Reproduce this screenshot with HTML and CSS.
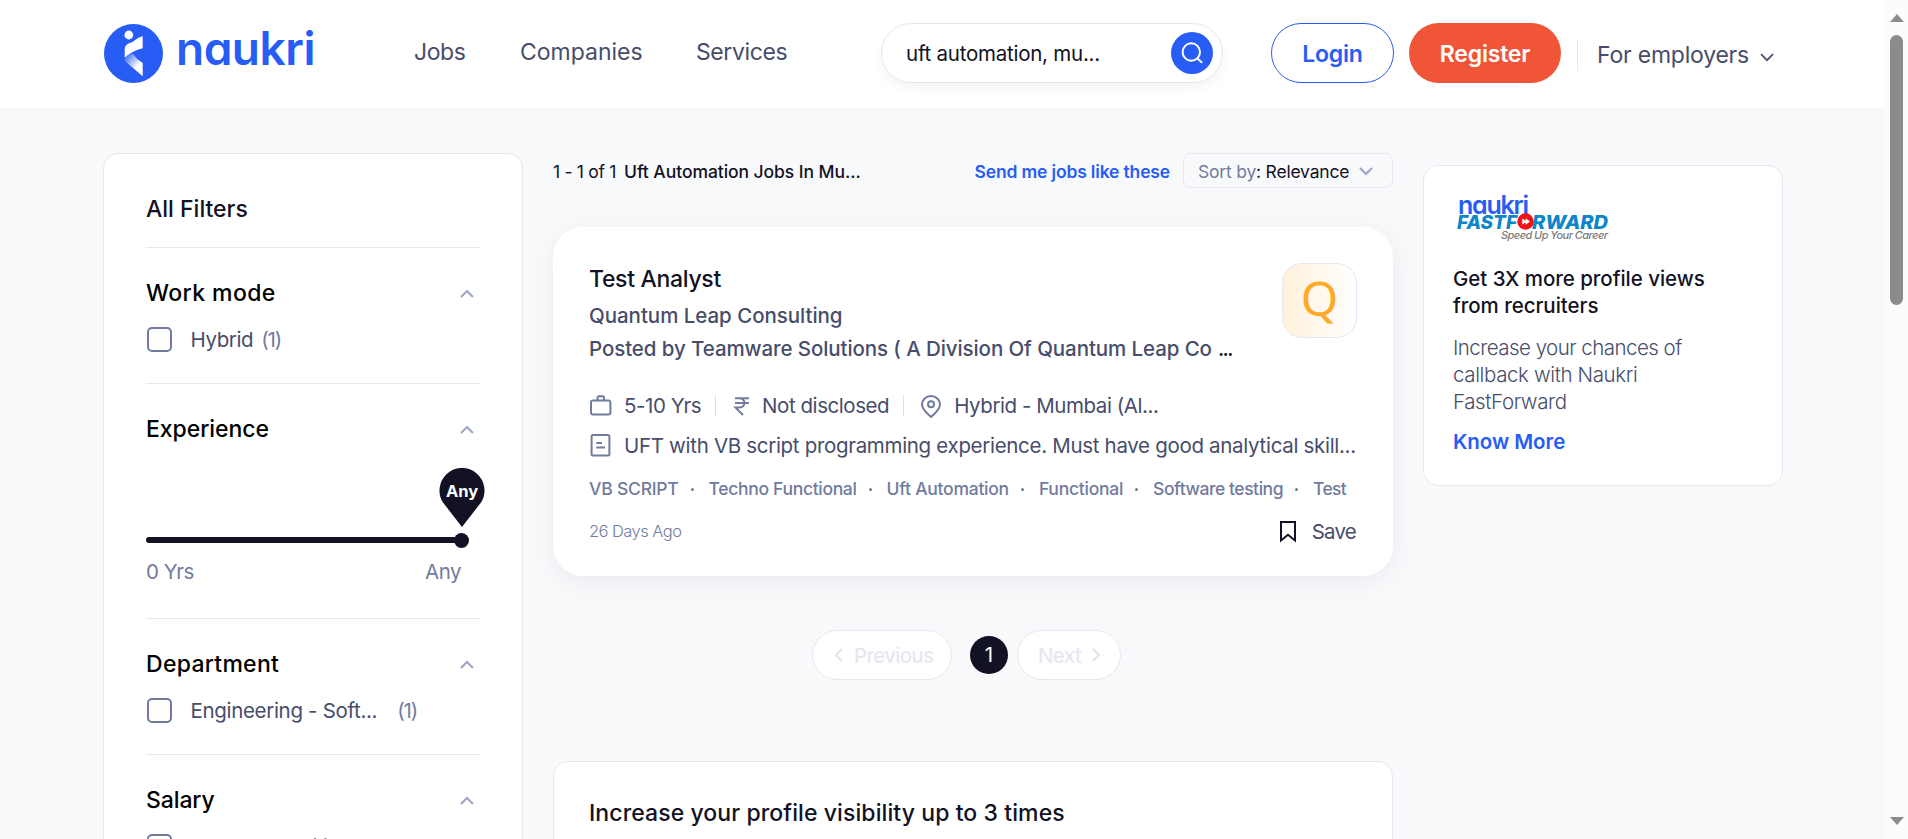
FILE: index.html
```html
<!DOCTYPE html>
<html lang="en">
<head>
<meta charset="utf-8">
<title>Uft Automation Jobs In Mumbai</title>
<link rel="stylesheet" href="styles.css">
</head>
<body>
<div class="viewport">
<div class="page">
<header class="header">
  <a class="brand">
    <svg class="brand-mark" width="59" height="59" viewBox="0 0 59 59">
      <defs><linearGradient id="fold" x1="0" y1="0" x2="0.8" y2="0.8"><stop offset="0.15" stop-color="#fff" stop-opacity="0.2"/><stop offset="0.8" stop-color="#fff"/></linearGradient></defs>
      <circle cx="29.5" cy="29.5" r="29.5" fill="#275df5"/>
      <circle cx="24.8" cy="11" r="4.4" fill="#fff"/>
      <path d="M20.7 33.8V25Q20.9 21.5 24 19.7Q29 18.5 31.5 15.8Q34 13.4 38.7 12.2V24.2Q28 26.8 20.7 33.8Z" fill="#fff"/>
      <path d="M20.7 33.8Q24 31 28.7 29.8Q32.5 35.5 38.7 39V52.2L22 38Q20.7 36.5 20.7 33.8Z" fill="url(#fold)"/>
    </svg>
    <span class="brand-name">naukri</span>
  </a>
  <nav class="nav"><a class="n1">Jobs</a><a class="n2">Companies</a><a class="n3">Services</a></nav>
  <div class="search"><span class="search-text">uft automation, mu...</span>
    <span class="search-btn"><svg width="42" height="42" viewBox="0 0 42 42" fill="none" stroke="#fff" stroke-width="2" stroke-linecap="round"><circle cx="20.3" cy="20" r="8.7"/><path d="M26.8 26.8L30.5 30.3"/></svg></span>
  </div>
  <a class="btn login">Login</a>
  <a class="btn register">Register</a>
  <div class="employers"><span>For employers</span><svg width="14" height="9" viewBox="0 0 14 9" fill="none" stroke="#474d6a" stroke-width="1.7"><path d="M1 1.2L7 7.2L13 1.2"/></svg></div>
</header>

<div class="content">
  <aside class="filters">
    <div class="filters-head">All Filters</div>
    <section class="filter">
      <h3><span class="f1">Work mode</span><svg class="chev" width="14" height="9" viewBox="0 0 14 9"><path d="M1 8L7 2L13 8"/></svg></h3>
      <div class="option"><i class="box"></i><span class="o1">Hybrid</span><span class="count">(1)</span></div>
    </section>
    <section class="filter experience">
      <h3><span class="f2">Experience</span><svg class="chev" width="14" height="9" viewBox="0 0 14 9"><path d="M1 8L7 2L13 8"/></svg></h3>
      <div class="track"><i class="knob"></i>
        <div class="pin"><svg width="46" height="60" viewBox="0 0 46 60"><path d="M23 59L4 34.5A22.5 22.5 0 1 1 42 34.5Z" fill="#121224"/></svg><b class="pin-label">Any</b></div>
      </div>
      <div class="range"><span class="r1">0 Yrs</span><span class="r2">Any</span></div>
    </section>
    <section class="filter">
      <h3><span class="f3">Department</span><svg class="chev" width="14" height="9" viewBox="0 0 14 9"><path d="M1 8L7 2L13 8"/></svg></h3>
      <div class="option"><i class="box"></i><span class="o2">Engineering - Soft...</span><span class="count far">(1)</span></div>
    </section>
    <section class="filter">
      <h3><span class="f4">Salary</span><svg class="chev" width="14" height="9" viewBox="0 0 14 9"><path d="M1 8L7 2L13 8"/></svg></h3>
      <div class="option"><i class="box"></i><span class="o3">10-15 Lakhs</span><span class="count">(1)</span></div>
    </section>
  </aside>

  <main class="results">
    <div class="results-head">
      <span class="showing">1 - 1 of 1</span><h1 class="query">Uft Automation Jobs In Mu...</h1>
      <a class="alert">Send me jobs like these</a>
      <div class="sort"><span class="sort-by">Sort by</span><span class="sort-val">: Relevance</span><svg class="chev" width="14" height="9" viewBox="0 0 14 9"><path d="M1 1L7 7L13 1"/></svg></div>
    </div>

    <article class="job">
      <div class="job-logo">Q</div>
      <h2 class="job-title">Test Analyst</h2>
      <div class="company">Quantum Leap Consulting</div>
      <div class="posted">Posted by Teamware Solutions ( A Division Of Quantum Leap Co<em>...</em></div>
      <div class="meta">
        <svg class="ic" width="24" height="24" viewBox="0 1 24 24"><rect x="2" y="7.4" width="19.4" height="14" rx="2"/><path d="M8.5 7V4.8Q8.5 3.2 10 3.2H13.4Q15 3.2 15 4.8V7"/></svg>
        <span class="m1">5-10 Yrs</span><i class="bar"></i>
        <svg class="ic" width="18" height="24" viewBox="0 0 18 24"><path d="M2 4.2H16M2 9H16M2 4.2H6Q11.5 4.5 11.5 9Q11.3 13.4 6 13.6H2.6L10 21"/></svg>
        <span class="m2">Not disclosed</span><i class="bar"></i>
        <svg class="ic" width="22" height="24" viewBox="1 0 22 24"><path d="M11 23C7 19.3 2 15.5 2 10.8A9 8.8 0 0 1 20 10.8C20 15.5 15 19.3 11 23Z"/><circle cx="11" cy="10.3" r="3"/></svg>
        <span class="m3">Hybrid - Mumbai (Al...</span>
      </div>
      <div class="desc">
        <svg class="ic" width="24" height="24" viewBox="0 0.8 24 24"><rect x="2.6" y="1.8" width="17.8" height="20.4" rx="1.5"/><path d="M7.3 9.8H13M7.3 14.4H16"/></svg>
        <span class="d1">UFT with VB script programming experience. Must have good analytical skill...</span>
      </div>
      <ul class="tags"><li class="t1">VB SCRIPT</li><li class="t2">Techno Functional</li><li class="t3">Uft Automation</li><li class="t4">Functional</li><li class="t5">Software testing</li><li class="t6">Test</li></ul>
      <div class="foot"><span class="age">26 Days Ago</span>
        <span class="save"><svg width="18" height="23" viewBox="0 0 18 23" fill="none" stroke="#121224" stroke-width="2"><path d="M2 2H16V20.5L9 14.8L2 20.5Z"/></svg><span>Save</span></span>
      </div>
    </article>

    <div class="pager">
      <a class="pg prev"><svg width="9" height="14" viewBox="0 0 9 14"><path d="M8 1L2 7L8 13"/></svg><span>Previous</span></a>
      <a class="current">1</a>
      <a class="pg next"><span>Next</span><svg width="9" height="14" viewBox="0 0 9 14"><path d="M1 1L7 7L1 13"/></svg></a>
    </div>

    <section class="boost"><h2>Increase your profile visibility up to 3 times</h2></section>
  </main>

  <aside class="promo">
    <svg class="ff" width="160" height="52" viewBox="0 0 160 52">
      <text class="ff-brand" x="4" y="24" textLength="71">naukri</text>
      <text class="ff-name" x="3" y="38.5" textLength="60" lengthAdjust="spacingAndGlyphs">FASTF</text>
      <text class="ff-name" x="78" y="38.5" textLength="76" lengthAdjust="spacingAndGlyphs">RWARD</text>
      <circle cx="71.5" cy="31.5" r="8.2" fill="#f01216"/><path d="M68.3 28.4V34.6L71.6 32.2V34.8L76 31.5L71.6 28.2V30.8Z" fill="#fff"/>
      <text class="ff-tag" x="47" y="48.5" textLength="107">Speed Up Your Career</text>
    </svg>
    <h4>Get 3X more profile views<br>from recruiters</h4>
    <p><span class="p3">Increase your chances of</span><br><span class="p4">callback with Naukri</span><br><span class="p5">FastForward</span></p>
    <a class="know">Know More</a>
  </aside>
</div>
</div>
<div class="scrollbar"><i class="up"></i><i class="thumb"></i><i class="down"></i></div>
</div>
</body>
</html>
```
FILE: styles.css
```css
* { box-sizing: border-box; }
body { margin: 0; font-family: Inter, "Liberation Sans", sans-serif; color: #121224; background: #f8f9fb; }
h1, h2, h3, h4, p, ul { margin: 0; padding: 0; font-weight: 500; }
i, em { font-style: normal; }
svg { display: block; flex: none; }
.viewport { display: flex; width: 1908px; height: 839px; overflow: hidden; }
.page { width: 1885px; flex: none; }

/* Header */
.header { display: flex; align-items: flex-start; height: 108px; padding: 23px 0 0 104px; background: #fff; color: #474d6a; font-size: 23px; white-space: nowrap; }
.brand { display: flex; width: 310px; color: #275df5; }
.brand-mark { margin-top: 0.5px; }
.brand-name { margin-left: 13px; font-size: 46px; font-weight: 600; line-height: 51px; letter-spacing: -0.5px; font-feature-settings: "cv11"; }
.nav { display: flex; width: 467px; line-height: 59px; }
.n1 { width: 106px; letter-spacing: -0.4px; }
.n2 { width: 176px; letter-spacing: 0; }
.n3 { letter-spacing: -0.4px; }
.search { display: flex; justify-content: space-between; width: 342px; height: 60px; padding: 8px 9px 0 24px; border: 1px solid #e7e7f1; border-radius: 30px; box-shadow: 0 6px 12px rgba(30, 10, 58, 0.04); background: #fff; color: #121224; font-size: 20.5px; line-height: 43px; }
.search-text { letter-spacing: -0.24px; }
.search-btn { width: 42px; height: 42px; border-radius: 50%; background: #275df5; }
.btn { height: 60px; border-radius: 30px; line-height: 62px; font-weight: 600; letter-spacing: -0.2px; text-align: center; }
.login { width: 123px; margin-left: 48px; border: 1px solid #275df5; color: #275df5; line-height: 60px; }
.register { width: 152px; margin-left: 15px; background: #f05537; color: #fff; }
.employers { display: flex; align-items: center; gap: 11px; height: 32px; margin: 16px 0 0 16px; padding-left: 19px; border-left: 1px solid #e7e7f1; line-height: 31px; letter-spacing: -0.22px; }
.employers svg { margin-top: 4px; }

/* Filters */
.content { display: flex; align-items: flex-start; padding: 45px 0 0 103px; }
.filters { width: 420px; height: 800px; padding: 0 42px; border: 1px solid #e7e7f1; border-radius: 15px; background: #fff; }
.filters-head { height: 94px; padding-top: 40px; border-bottom: 1px solid #e7e7f1; font-size: 23px; font-weight: 500; line-height: 31px; }
.filter { height: 136px; padding-top: 30px; border-bottom: 1px solid #e7e7f1; white-space: nowrap; }
.filter h3 { display: flex; justify-content: space-between; align-items: center; padding-right: 6px; color: #000; font-size: 23px; line-height: 31px; }
.f1 { letter-spacing: 0.4px; }
.f2 { letter-spacing: -0.05px; }
.f3 { letter-spacing: 0.28px; }
.f4 { letter-spacing: -0.1px; }
.chev { fill: none; stroke: #9fa6c8; stroke-width: 2.2; }
.option { display: flex; height: 25px; margin-top: 18px; color: #474d6a; font-size: 20.5px; line-height: 25px; }
.box { width: 25px; height: 25px; margin: 0 18.5px 0 1px; border: 2px solid #717b9e; border-radius: 5px; }
.o1 { letter-spacing: -0.4px; }
.o2, .o3 { letter-spacing: -0.32px; }
.count { margin-left: 8px; color: #717b9e; letter-spacing: -1.1px; }
.count.far { margin-left: 20px; }
.filter.experience { height: 235px; }
.track { position: relative; width: 316px; height: 6px; margin-top: 92px; border-radius: 3px; background: #121224; }
.knob { position: absolute; right: -7px; top: -4px; width: 15px; height: 15px; border-radius: 50%; background: #121224; }
.pin { position: absolute; right: -23px; top: -69px; }
.pin-label { position: absolute; inset: 11px 0 auto; text-align: center; color: #fff; font-size: 16.5px; line-height: 25px; }
.range { display: flex; justify-content: space-between; width: 315px; margin-top: 16px; color: #717b9e; font-size: 20.5px; line-height: 25px; letter-spacing: -0.5px; }

/* Results */
.results { width: 840px; margin-left: 30px; white-space: nowrap; }
.results-head { display: flex; height: 35px; font-size: 17.5px; line-height: 37px; }
.showing { width: 71px; letter-spacing: -0.3px; }
.query { font-size: 17.5px; letter-spacing: -0.06px; }
.alert { margin-left: auto; color: #275df5; font-weight: 600; letter-spacing: -0.16px; }
.sort { display: flex; align-items: center; width: 210px; height: 35px; margin-left: 13px; padding: 1px 19px 0 14px; border: 1px solid #e7e7f1; border-radius: 8px; letter-spacing: -0.2px; }
.sort-by { color: #717b9e; }
.sort .chev { margin-left: auto; }
.job { position: relative; height: 349px; margin-top: 39px; padding: 36px; border-radius: 30px; background: #fff; box-shadow: 0 6px 24px rgba(30, 10, 58, 0.06); color: #474d6a; font-size: 20.5px; }
.job-logo { position: absolute; top: 36px; right: 36px; width: 75px; height: 75px; border: 1px solid #e7e7f1; border-radius: 20px; background: linear-gradient(90deg, #fff1dc, #fff); color: #ffa928; font: 48px/68px "Noto Sans", sans-serif; text-align: center; }
.job-title { color: #121224; font-size: 23px; line-height: 33px; letter-spacing: -0.31px; }
.company { font-weight: 500; line-height: 39px; letter-spacing: -0.04px; }
.posted { font-weight: 500; line-height: 27px; letter-spacing: -0.09px; }
.posted em { margin-left: 6px; color: #121224; letter-spacing: -1.6px; }
.meta { display: flex; align-items: center; height: 25px; margin-top: 31px; line-height: 25px; letter-spacing: -0.44px; }
.ic { fill: none; stroke: #717b9e; stroke-width: 2; margin-right: 11px; }
.bar { width: 1px; height: 21px; margin: 0 17px 0 14px; background: #dcdcea; }
.desc { display: flex; align-items: center; height: 25px; margin-top: 15px; line-height: 25px; letter-spacing: -0.31px; }
.tags { display: flex; margin-top: 18px; color: #717b9e; font-size: 17.5px; line-height: 25px; letter-spacing: -0.21px; list-style: none; }
.t2 { letter-spacing: -0.32px; }
.t3, .t4 { letter-spacing: -0.25px; }
.t5 { letter-spacing: -0.45px; }
.t6 { letter-spacing: -0.7px; }
.tags li + li::before { content: ""; display: inline-block; width: 3px; height: 3px; margin: 0 15px 2px 12px; border-radius: 50%; background: #717b9e; vertical-align: middle; }
.foot { display: flex; justify-content: space-between; height: 23px; margin-top: 19px; line-height: 23px; }
.age { color: #717b9e; font-size: 16.5px; font-weight: 300; letter-spacing: -0.55px; }
.save { display: flex; gap: 15px; padding-right: 1px; letter-spacing: -0.8px; }

/* Pagination */
.pager { display: flex; align-items: center; height: 50px; margin: 54px 0 0 259px; font-size: 20.5px; }
.pg { display: flex; align-items: center; height: 50px; border: 1px solid #e7e7f1; border-radius: 25px; background: #fff; color: #e7e7f1; font-weight: 500; letter-spacing: -0.73px; }
.pg svg { fill: none; stroke: #e2e2ee; stroke-width: 2; }
.prev { width: 140px; padding-left: 21px; gap: 11px; }
.next { width: 104px; margin-left: 9px; padding-left: 20px; gap: 11px; }
.current { width: 38px; height: 38px; margin-left: 18px; border-radius: 50%; background: #121224; color: #fff; line-height: 38px; text-align: center; }
.boost { height: 200px; margin-top: 81px; padding: 36px 35px; border: 1px solid #e7e7f1; border-radius: 15px; background: #fff; }
.boost h2 { font-size: 23px; line-height: 31px; letter-spacing: 0.09px; }

/* Promo card */
.promo { width: 360px; height: 321px; margin: 12px 0 0 30px; padding: 24px 30px 0 29px; border: 1px solid #e7e7f1; border-radius: 15px; background: #fff; font-size: 20.5px; line-height: 27px; white-space: nowrap; }
.ff { margin-left: 1px; }
.ff-brand { font-size: 25px; font-weight: 600; font-feature-settings: "cv11"; fill: #275df5; }
.ff-name { font-size: 19px; font-weight: 800; font-style: italic; fill: #0c85c9; }
.ff-tag { font-size: 11px; font-weight: 500; font-style: italic; fill: #7b7b7b; }
.promo h4 { margin-top: 23px; letter-spacing: -0.04px; }
.promo p { margin-top: 15px; color: #474d6a; font-weight: 300; }
.p3 { letter-spacing: -0.54px; }
.p4, .p5 { letter-spacing: -0.38px; }
.know { display: block; margin-top: 13px; color: #275df5; font-weight: 600; letter-spacing: -0.05px; }

/* Scrollbar */
.scrollbar { display: flex; flex-direction: column; align-items: center; width: 23px; height: 839px; padding: 14px 0; background: #fcfcfc; }
.up { border: 7.5px solid transparent; border-top: 0; border-bottom: 8px solid #8b8b8b; }
.thumb { width: 13px; height: 270px; margin-top: 13px; border-radius: 7px; background: #8b8b8b; }
.down { margin-top: auto; border: 7.5px solid transparent; border-bottom: 0; border-top: 8px solid #8b8b8b; }
```
